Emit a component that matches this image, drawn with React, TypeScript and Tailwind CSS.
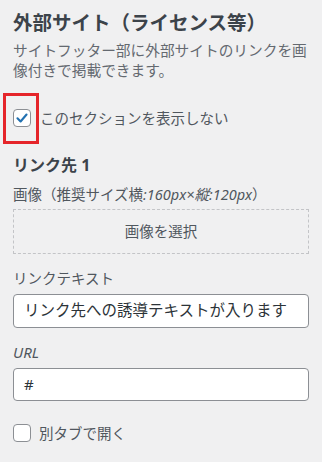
import React from "react";

const FONT = '"Noto Sans", "Noto Sans CJK JP", sans-serif';

function Check({ checked }: { checked: boolean }) {
  return (
    <span className="flex h-[18px] w-[18px] shrink-0 items-center justify-center rounded-[4px] border border-[#8c8f94] bg-white">
      {checked && (
        <svg width="14" height="14" viewBox="0 0 20 20">
          <path d="M3.5 10.5 L8 15 L16.5 5" fill="none" stroke="#2271b1" strokeWidth="3" strokeLinecap="round" strokeLinejoin="round" />
        </svg>
      )}
    </span>
  );
}

export default function App() {
  return (
    <div className="relative h-[462px] w-[322px] overflow-hidden bg-[#f0f0f1] pl-[13px] pr-[13px] pt-[10px]" style={{ fontFamily: FONT }}>
      <div className="text-[19.5px] font-bold leading-[26px] text-[#3c434a]">外部サイト（ライセンス等）</div>
      <div className="mt-[4px] text-[14.7px] leading-[20px] text-[#646970]">
        サイトフッター部に外部サイトのリンクを画像付きで掲載できます。
      </div>

      <div className="mt-[29px] flex h-[18px] items-center gap-[9px]">
        <Check checked />
        <span className="text-[14.5px] leading-[20px] text-[#50575e]">このセクションを表示しない</span>
      </div>
      <div className="pointer-events-none absolute left-[3px] top-[93px] h-[51px] w-[36px] border-[3px] border-[#e5252a]" />

      <div className="mt-[27px] text-[16px] font-bold leading-[22px] text-[#3c434a]">リンク先 1</div>
      <div className="mt-[8px] text-[14.5px] leading-[20px] text-[#50575e]">
        画像（推奨サイズ横<em className="italic">:160px×縦:120px</em>）
      </div>

      <div className="mt-[5px] flex h-[45px] items-center justify-center border border-dashed border-[#c3c4c7] text-[14.5px] text-[#50575e]">
        画像を選択
      </div>

      <div className="mt-[14px] text-[14.5px] leading-[20px] text-[#50575e]">リンクテキスト</div>
      <div className="mt-[6px] flex h-[34px] items-center rounded-[4px] border border-[#8c8f94] bg-white px-[10px] text-[15.5px] text-[#2c3338]">
        リンク先への誘導テキストが入ります
      </div>

      <div className="mt-[14px] text-[15px] italic leading-[20px] text-[#50575e]">URL</div>
      <div className="mt-[6px] flex h-[33px] items-center rounded-[4px] border border-[#8c8f94] bg-white px-[10px] text-[15px] text-[#2c3338]">
        #
      </div>

      <div className="mt-[23px] flex h-[18px] items-center gap-[8px]">
        <Check checked={false} />
        <span className="text-[14.5px] leading-[20px] text-[#50575e]">別タブで開く</span>
      </div>
    </div>
  );
}
